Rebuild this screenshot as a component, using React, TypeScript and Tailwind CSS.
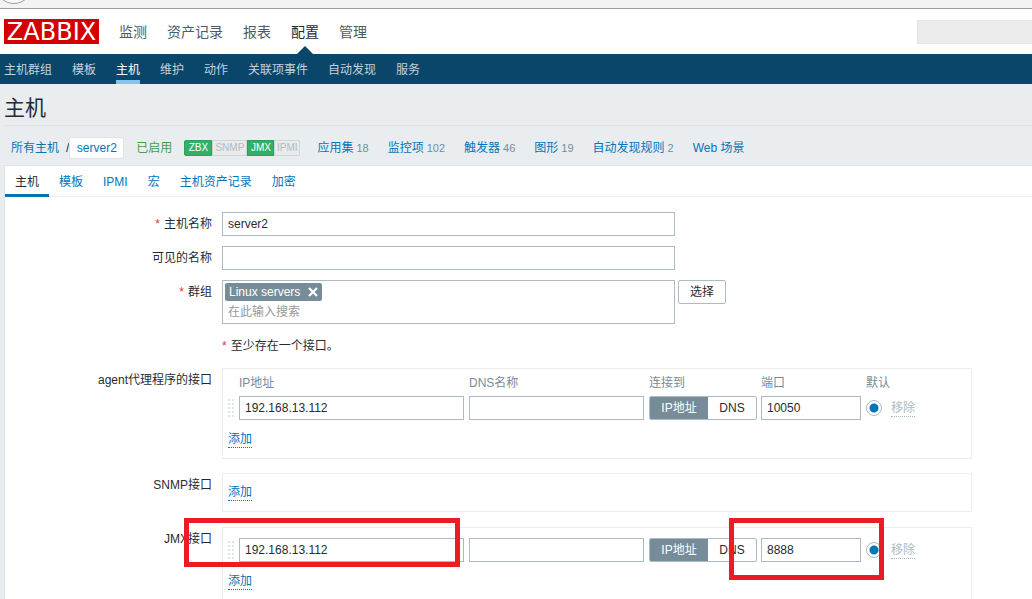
import React, { useState } from 'react';
import clsx from 'clsx';

const mainMenu = ['监测', '资产记录', '报表', '配置', '管理'];
const subMenu = ['主机群组', '模板', '主机', '维护', '动作', '关联项事件', '自动发现', '服务'];
const tabs = ['主机', '模板', 'IPMI', '宏', '主机资产记录', '加密'];

const statuses = [
  { name: 'ZBX', on: true, width: 'w-7' },
  { name: 'SNMP', on: false, width: 'w-[35px]' },
  { name: 'JMX', on: true, width: 'w-[27px]' },
  { name: 'IPMI', on: false, width: 'w-[26px]' },
];

const hostLinks = [
  { name: '应用集', count: 18 },
  { name: '监控项', count: 102 },
  { name: '触发器', count: 46 },
  { name: '图形', count: 19 },
  { name: '自动发现规则', count: 2 },
  { name: 'Web 场景' },
];

const inputClass = 'block h-6 border border-[#acbbc2] bg-white px-[5px] text-xs text-[#1f2c33] outline-none focus:border-[#0275b8]';

const Required = () => <span className="mr-1 text-[#e33734]">*</span>;

const DragHandle = () => (
  <svg width="6" height="18" viewBox="0 0 6 18" fill="#dfe4e7" className="block">
    {[0, 4, 8, 12, 16].map((y) => (
      <g key={y}><rect x="0" y={y} width="2" height="2" /><rect x="4" y={y} width="2" height="2" /></g>
    ))}
  </svg>
);

const AddButton = ({ className }: { className?: string }) => (
  <button type="button" className={clsx('block cursor-pointer border-b border-dotted border-[#0275b8] text-xs leading-4 text-[#0275b8]', className)}>添加</button>
);

interface FormRowProps {
  label?: React.ReactNode;
  htmlFor?: string;
  className?: string;
  children: React.ReactNode;
}

const FormRow = ({ label, htmlFor, className, children }: FormRowProps) => (
  <div className={clsx('flex gap-2.5', className)}>
    <div className="w-[207px] shrink-0 text-right leading-6">
      {htmlFor ? <label htmlFor={htmlFor}>{label}</label> : label}
    </div>
    {children}
  </div>
);

const InterfaceBox = ({ children, className }: { children: React.ReactNode; className?: string }) => (
  <div className={clsx('w-full max-w-[750px] border border-[#ebeef0] px-[5px] pb-2.5', className)}>{children}</div>
);

interface InterfaceTableProps {
  type: string;
  ip: string;
  port: string;
  header?: boolean;
}

const InterfaceTable = ({ type, ip, port, header }: InterfaceTableProps) => {
  const [useIp, setUseIp] = useState(true);
  const toggleClass = 'flex cursor-pointer items-center justify-center';

  return (
    <table className="w-full table-fixed border-collapse text-left">
      <colgroup>
        <col className="w-[11px]" />
        <col className="w-[230px]" />
        <col className="w-[180px]" />
        <col className="w-[112px]" />
        <col className="w-[105px]" />
        <col className="w-[25px]" />
        <col />
      </colgroup>
      {header && (
        <thead>
          <tr className="h-[27px] text-[#768d99]">
            <th className="p-0" />
            <th className="p-0 font-normal">IP地址</th>
            <th className="p-0 font-normal">DNS名称</th>
            <th className="p-0 font-normal">连接到</th>
            <th className="p-0 font-normal">端口</th>
            <th className="p-0 font-normal" colSpan={2}>默认</th>
          </tr>
        </thead>
      )}
      <tbody>
        <tr>
          <td className="p-0"><DragHandle /></td>
          <td className="p-0"><input type="text" aria-label={`${type} IP地址`} defaultValue={ip} className={clsx(inputClass, 'w-[225px]')} /></td>
          <td className="p-0"><input type="text" aria-label={`${type} DNS名称`} className={clsx(inputClass, 'w-[175px]')} /></td>
          <td className="p-0">
            <div className="flex h-6 w-[108px] overflow-hidden rounded-xs border border-[#acbbc2]">
              <label className={clsx(toggleClass, 'w-[58px]', useIp && 'bg-[#768d99] text-white')}>
                <input type="radio" name={`${type}-useip`} checked={useIp} onChange={() => setUseIp(true)} className="sr-only" />IP地址
              </label>
              <label className={clsx(toggleClass, 'flex-1', !useIp && 'bg-[#768d99] text-white')}>
                <input type="radio" name={`${type}-useip`} checked={!useIp} onChange={() => setUseIp(false)} className="sr-only" />DNS
              </label>
            </div>
          </td>
          <td className="p-0"><input type="text" aria-label={`${type} 端口`} defaultValue={port} className={clsx(inputClass, 'w-[100px]')} /></td>
          <td className="p-0">
            <input type="radio" name={`${type}-default`} aria-label={`${type} 默认`} defaultChecked className="block size-4 appearance-none rounded-full border border-[#acbbc2] bg-[radial-gradient(circle,#fff_100%,#fff_100%)] checked:bg-[radial-gradient(circle,#0275b8_4px,#fff_5px)]" />
          </td>
          <td className="p-0">
            <button type="button" disabled className="block border-b border-dotted border-[#acbbc2] leading-4 text-[#acbbc2]">移除</button>
          </td>
        </tr>
      </tbody>
    </table>
  );
};

const App: React.FC = () => {
  const [activeTab, setActiveTab] = useState('主机');

  return (
    <div className="min-h-screen overflow-hidden bg-[#e9edf0] font-['Liberation_Sans','Noto_Sans_CJK_SC',sans-serif] text-xs text-[#1f2c33]">
      {/* Browser toolbar edge */}
      <div className="h-[9px] border-b border-[#9f9f9f] bg-[#f3f3f3]">
        <svg width="30" height="5" viewBox="0 0 30 5" className="block">
          <circle cx="14" cy="-14.5" r="18" fill="#f9f9f9" stroke="#a0a0a0" />
        </svg>
      </div>

      <header>
        <div className="flex h-[45px] items-center bg-white pl-1">
          <a href="#" className="flex h-[25px] w-[95px] items-center justify-center bg-[#d40000] font-['DejaVu_Sans',sans-serif] text-2xl leading-none text-white">ZABBIX</a>
          <nav className="ml-5 flex flex-1 gap-5 self-stretch text-sm">
            {mainMenu.map((item) => (
              <a key={item} href="#" className={clsx('relative flex items-center', item === '配置' ? 'text-[#1f2c33]' : 'text-[#4f5b62]')}>
                {item}
                {item === '配置' && <span className="absolute bottom-0 left-1/2 -translate-x-1/2 border-x-8 border-b-8 border-x-transparent border-b-[#0a466a]" />}
              </a>
            ))}
          </nav>
          <input type="search" aria-label="搜索" className="h-6 w-[115px] border border-r-0 border-[#e3e5e6] bg-[#ebebeb] px-1 outline-none" />
        </div>
        <nav className="flex h-[30px] gap-5 bg-[#0a466a] pl-1">
          {subMenu.map((item) => (
            <a key={item} href="#" className={clsx('flex items-center border-b-4 pt-1.5', item === '主机' ? 'border-b-[#80c6f3] text-white' : 'border-b-transparent text-[#c3d3dd]')}>{item}</a>
          ))}
        </nav>
      </header>

      <main className="pl-1">
        <h1 className="flex h-[42px] items-center border-b border-[#dfe4e7] pt-1.5 text-[21px]">主机</h1>

        <div className="mt-[11px] flex h-[22px] items-center pl-[7px] whitespace-nowrap">
          <a href="#" className="text-[#0275b8]">所有主机</a>
          <span className="ml-[7px]">/</span>
          <a href="#" className="flex h-[22px] w-[55px] items-center justify-center rounded-xs border border-[#dfe4e7] bg-white text-[#0275b8]">server2</a>
          <span className="ml-3 text-[#429e47]">已启用</span>
          <div className="mx-3 flex text-[10px]">
            {statuses.map((s) => (
              <span key={s.name} className={clsx('flex h-4 items-center justify-center border first:rounded-l-xs last:rounded-r-xs', s.width, s.on ? 'border-[#2f9f5e] bg-[#34af67] text-white' : 'border-[#ccd5d9] bg-[#ebebeb] text-[#acbbc2]')}>{s.name}</span>
            ))}
          </div>
          <ul className="ml-[5px] flex gap-[19px]">
            {hostLinks.map((l) => (
              <li key={l.name} className="flex items-center gap-[3px]">
                <a href="#" className="text-[#0275b8]">{l.name}</a>
                {l.count && <span className="text-[11px] text-[#768d99]">{l.count}</span>}
              </li>
            ))}
          </ul>
        </div>

        <div className="mt-1.5 border-t border-l border-[#dfe4e7] bg-white">
          {/* Tabs */}
          <div role="tablist" className="flex h-[31px] border-b border-[#ebeef0]">
            {tabs.map((tab) => (
              <button key={tab} type="button" role="tab" aria-selected={activeTab === tab} onClick={() => setActiveTab(tab)} className={clsx('-mb-px cursor-pointer border-y-3 border-t-transparent px-2.5', activeTab === tab ? 'border-b-[#0275b8]' : 'border-b-transparent text-[#0275b8]')}>{tab}</button>
            ))}
          </div>

          <form className="flex flex-col gap-2.5 pt-[15px]">
            <FormRow label={<><Required />主机名称</>} htmlFor="host">
              <input id="host" type="text" defaultValue="server2" className={clsx(inputClass, 'w-[453px]')} />
            </FormRow>
            <FormRow label="可见的名称" htmlFor="visible-name">
              <input id="visible-name" type="text" className={clsx(inputClass, 'w-[453px]')} />
            </FormRow>
            <FormRow label={<><Required />群组</>} htmlFor="groups">
              <div className="flex items-start gap-[3px]">
                <div className="h-11 w-[453px] border border-[#acbbc2] p-0.5">
                  <span className="flex h-[18px] w-fit items-center gap-2 rounded-xs bg-[#768d99] px-1 text-white">
                    Linux servers
                    <button type="button" aria-label="移除 Linux servers" className="cursor-pointer">
                      <svg width="10" height="10" viewBox="0 0 10 10" stroke="#fff" strokeWidth="2.2" className="block"><path d="M1 1l8 8M9 1l-8 8" /></svg>
                    </button>
                  </span>
                  <input id="groups" type="text" placeholder="在此输入搜索" className="mt-0.5 block h-[18px] w-full px-[3px] outline-none placeholder:text-[#999]" />
                </div>
                <button type="button" className="h-6 w-12 cursor-pointer rounded-xs border border-[#acbbc2] bg-white">选择</button>
              </div>
            </FormRow>
            <FormRow>
              <p className="leading-6"><Required />至少存在一个接口。</p>
            </FormRow>
            <FormRow label="agent代理程序的接口">
              <InterfaceBox>
                <InterfaceTable type="agent" ip="192.168.13.112" port="10050" header />
                <AddButton className="mt-[11px]" />
              </InterfaceBox>
            </FormRow>
            <FormRow label="SNMP接口" className="mt-1">
              <InterfaceBox className="pt-2.5">
                <AddButton />
              </InterfaceBox>
            </FormRow>
            <FormRow label="JMX接口" className="relative mt-[5px]">
              <InterfaceBox className="pt-2.5">
                <InterfaceTable type="jmx" ip="192.168.13.112" port="8888" />
                <AddButton className="mt-[11px]" />
              </InterfaceBox>
              {/* Highlight frames over the JMX address and port */}
              <div className="pointer-events-none absolute -top-[9px] left-[179px] h-[49px] w-[276px] border-5 border-[#ed1c24]" />
              <div className="pointer-events-none absolute -top-[9px] left-[724px] h-[62px] w-[155px] border-5 border-[#ed1c24]" />
            </FormRow>
          </form>
        </div>
      </main>
    </div>
  );
};

export default App;
